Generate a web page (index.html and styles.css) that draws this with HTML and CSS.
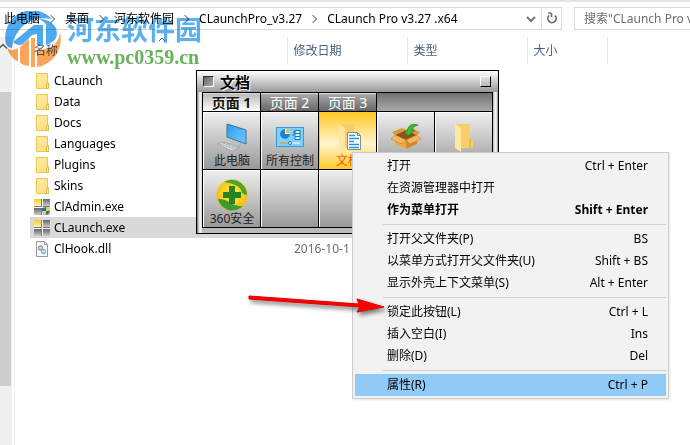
FILE: index.html
```html
<!DOCTYPE html>
<html lang="zh-CN">
<head>
    <meta charset="UTF-8">
    <meta name="viewport" content="width=device-width, initial-scale=1.0">
    <title>CLaunch Pro v3.27 .x64</title>
    <link rel="stylesheet" href="styles.css">
</head>
<body>
    <!-- shared icons -->
    <svg class="defs" width="0" height="0">
        <defs>
            <linearGradient id="folderFill" x1="0" y1="0" x2="1" y2="1">
                <stop offset="0" stop-color="#ffeca6"/>
                <stop offset="1" stop-color="#fbdc7c"/>
            </linearGradient>
            <linearGradient id="grayFill" x1="0" y1="0" x2="0" y2="1">
                <stop offset="0" stop-color="#666"/>
                <stop offset="1" stop-color="#ccc"/>
            </linearGradient>
            <linearGradient id="goldFill" x1="0" y1="0" x2="0" y2="1">
                <stop offset="0" stop-color="#ffc928"/>
                <stop offset="1" stop-color="#fff3b8"/>
            </linearGradient>
            <linearGradient id="screenFill" x1="0" y1="0" x2="1" y2="1">
                <stop offset="0" stop-color="#2b9df0"/>
                <stop offset="1" stop-color="#72cbff"/>
            </linearGradient>
            <radialGradient id="ballFill" cx="0.5" cy="0.45" r="0.6">
                <stop offset="0" stop-color="#fff04a"/>
                <stop offset="1" stop-color="#f7b500"/>
            </radialGradient>
            <symbol id="folder" viewBox="0 0 16 16">
                <path d="M2.500 0.500h11v9.500h1v5.500h-12z" fill="url(#folderFill)" stroke="#edc54f"/>
                <path d="M12.500 15.500v-4.500l2-1v5.500z" fill="#ffe9a0" stroke="#e5bb3f"/>
            </symbol>
            <symbol id="app" viewBox="0 0 16 16">
                <rect width="16" height="16" fill="#fff"/>
                <rect x="0" y="0" width="7" height="7" fill="url(#goldFill)"/>
                <rect x="8" y="0" width="8" height="7" fill="url(#grayFill)"/>
                <rect x="0" y="9" width="7" height="7" fill="url(#grayFill)"/>
                <rect x="8" y="9" width="8" height="7" fill="url(#grayFill)"/>
                <path d="M0 7.500h16M7.500 0v16" stroke="#777"/>
                <path d="M0 8.500h16M8.500 0v16" stroke="#fff"/>
            </symbol>
            <symbol id="bigFolder" viewBox="0 0 32 32">
                <path d="M7 3h15v14l3 3v7H11z" fill="#f6cf69"/>
                <path d="M7 3l6 4v24l-6-4z" fill="#ffe7a1"/>
                <path d="M21 18h2v9h-2z" fill="#e9bb4e"/>
            </symbol>
        </defs>
    </svg>

    <header class="toolbar">
        <nav class="address">
            <div class="crumbs">
                <a href="#">此电脑</a>
                <a href="#">桌面</a>
                <a href="#">河东软件园</a>
                <a href="#">CLaunchPro_v3.27</a>
                <a href="#">CLaunch Pro v3.27 .x64</a>
            </div>
            <button class="drop" aria-label="以前的位置">
                <svg width="12" height="8" viewBox="0 0 12 8"><path d="M2 2l4 4 4-4" fill="none" stroke="#777" stroke-width="2"/></svg>
            </button>
            <button class="refresh" aria-label="刷新">
                <svg width="12" height="13" viewBox="0 0 12 13"><path d="M9 3.500A4.200 4.200 0 1 1 3 3.500M5 1H2.200M5.500 1v4" fill="none" stroke="#666" stroke-width="1.600"/></svg>
            </button>
        </nav>
        <input class="search" type="text" aria-label="搜索" placeholder='搜索"CLaunch Pro v3.27 .x64"'>
    </header>

    <div class="explorer">
        <div class="scrollbar">
            <svg class="up" width="8" height="6" viewBox="0 0 8 6"><path d="M-1 5.500L3 1.500l4 4" fill="none" stroke="#555" stroke-width="1.500"/></svg>
            <div class="thumb"></div>
        </div>
        <main class="files">
            <table>
                <thead>
                    <tr>
                        <th class="name sorted">
                            名称
                            <svg width="8" height="5" viewBox="0 0 8 5"><path d="M1 4l3-3 3 3" fill="none" stroke="#666"/></svg>
                        </th>
                        <th class="date">修改日期</th>
                        <th class="type">类型</th>
                        <th class="size">大小</th>
                        <th></th>
                    </tr>
                </thead>
                <tbody>
                    <tr><td><svg class="icon"><use href="#folder"/></svg>CLaunch</td><td></td><td></td><td></td></tr>
                    <tr><td><svg class="icon"><use href="#folder"/></svg>Data</td><td></td><td></td><td></td></tr>
                    <tr><td><svg class="icon"><use href="#folder"/></svg>Docs</td><td></td><td></td><td></td></tr>
                    <tr><td><svg class="icon"><use href="#folder"/></svg>Languages</td><td></td><td></td><td></td></tr>
                    <tr><td><svg class="icon"><use href="#folder"/></svg>Plugins</td><td></td><td></td><td></td></tr>
                    <tr><td><svg class="icon"><use href="#folder"/></svg>Skins</td><td></td><td></td><td></td></tr>
                    <tr>
                        <td>
                            <svg class="icon" viewBox="0 0 16 16">
                                <use href="#app"/>
                                <path d="M12 8l4 1v3q-1 3-4 4-3-1-4-4V9z" fill="#1b6fc4"/>
                                <path d="M12 8l4 1v3h-4zM12 12v4q-3-1-4-4z" fill="#f9cf35"/>
                            </svg>ClAdmin.exe
                        </td>
                        <td></td><td></td><td></td>
                    </tr>
                    <tr class="selected"><td><svg class="icon"><use href="#app"/></svg>CLaunch.exe</td><td></td><td></td><td></td></tr>
                    <tr>
                        <td>
                            <svg class="icon" viewBox="0 0 16 16">
                                <path d="M2.500 0.500h8l3 3v12h-11z" fill="#fafafa" stroke="#999"/>
                                <path d="M10.500 0.500v3h3" fill="none" stroke="#999"/>
                                <circle cx="6.500" cy="7" r="2" fill="#ddd" stroke="#999" stroke-width="1.300"/>
                                <circle cx="9.500" cy="10.500" r="2" fill="#d9edf7" stroke="#8db2c6" stroke-width="1.300"/>
                            </svg>ClHook.dll
                        </td>
                        <td>2016-10-1</td><td></td><td></td>
                    </tr>
                </tbody>
            </table>
        </main>
    </div>

    <!-- site watermark -->
    <div class="watermark">
        <svg width="56" height="56" viewBox="0 0 56 56">
            <path d="M1 33A27 27 0 0 1 47 8Q30 5 19 14 9 22 7 37 3 37 1 33z" fill="#4fa9ee"/>
            <path d="M8 31L29 14h9v20h-6V23l-5 1-9 9q-5 3-10-2z" fill="#4fa9ee"/>
            <path d="M34 8q12 0 17 9 3 10-4 14-4 3-6 3V13q-3-3-7-5z" fill="#4fa9ee"/>
            <path d="M55 22A28 28 0 0 1 32 56V41q4-3 9-3 12-3 14-16z" fill="#f9a65a"/>
            <path d="M15 36l9-8v27q-5 0-9-3z" fill="#f9a65a"/>
            <path d="M26 27h4v29h-4z" fill="#f9a65a"/>
            <path d="M2 37q5 4 11 0v14Q5 46 2 37z" fill="#f9a65a"/>
        </svg>
        <div>
            <div class="site">河东软件园</div>
            <div class="url">www.pc0359.cn</div>
        </div>
    </div>

    <!-- launcher window -->
    <section class="launcher">
        <div class="title">
            <button class="box dark" aria-label="菜单"></button>
            <h1>文档</h1>
            <button class="box" aria-label="关闭"></button>
        </div>
        <div class="panel">
            <div class="tabs">
                <button class="active">页面 1</button>
                <button>页面 2</button>
                <button>页面 3</button>
            </div>
            <div class="grid">
                <button>
                    <svg viewBox="0 0 32 32">
                        <path d="M11 3l19 6v14l-19-7z" fill="url(#screenFill)" stroke="#3b6f98"/>
                        <path d="M1 23l6-2 17 5-8 4z" fill="#d7dce0" stroke="#a4abb0"/>
                        <path d="M4 23l15 5M7 22l15 5" stroke="#9aa2a8" stroke-dasharray="2 1"/>
                        <path d="M18 20l-3 3 6 2 4-2" fill="none" stroke="#b2b8bc"/>
                    </svg>
                    此电脑
                </button>
                <button>
                    <svg viewBox="0 0 32 32">
                        <rect x="2.500" y="6.500" width="27" height="19" fill="#7fd0fa" stroke="#3a9ad9"/>
                        <circle cx="11" cy="13" r="5" fill="#fff"/>
                        <path d="M11 13V8a5 5 0 1 0 5 5z" fill="#1583d8"/>
                        <path d="M12 12V8a5 5 0 0 1 4 4z" fill="#ffb52a"/>
                        <path d="M18 14h2v-4h2M21 9.500h5v3h-5zM21 12.500h5v3h-5zM21 15.500h5v3h-5z" fill="#d9f2ff" stroke="#1778bd"/>
                        <path d="M6 22h10" stroke="#f58a16"/>
                        <path d="M17 22h9" stroke="#fff"/>
                        <circle cx="16" cy="22" r="1.500" fill="#fff" stroke="#1778bd"/>
                    </svg>
                    所有控制
                </button>
                <button class="hot">
                    <svg viewBox="0 0 32 32">
                        <use href="#bigFolder"/>
                        <path d="M15.500 11.500h10l3 3v14h-13z" fill="#fff" stroke="#7d8d98"/>
                        <path d="M25.500 11.500v3h3" fill="none" stroke="#7d8d98"/>
                        <path d="M17 14.500h6M17 17.500h10M17 20.500h5M17 23.500h10M17 26.500h10" stroke="#2b93dc" stroke-width="1.500"/>
                    </svg>
                    文档
                </button>
                <button>
                    <svg viewBox="0 0 32 32">
                        <path d="M5 14l11-5 11 5-11 5z" fill="#8e5317"/>
                        <path d="M5 14l11 5v9L5 23z" fill="#eea747"/>
                        <path d="M27 14l-11 5v9l11-5z" fill="#d98928"/>
                        <path d="M5 14l11 5-4 4-11-5zM27 14l-11 5 4 4 11-5z" fill="#f2b65f" stroke="#b77422" stroke-width="0.500"/>
                        <path d="M5 14L2 11l10-4 4 2zM27 14l3-3-10-4-4 2z" fill="#e0973a"/>
                        <path d="M28 4q-9-3-11 6h-3l4 5 7-6h-3q1-4 6-5z" fill="#43b92c" stroke="#1e7b18" stroke-width="0.700"/>
                    </svg>
                </button>
                <button><svg viewBox="0 0 32 32"><use href="#bigFolder"/></svg></button>
                <button>
                    <svg viewBox="0 0 32 32">
                        <circle cx="16" cy="16" r="15.500" fill="url(#ballFill)"/>
                        <path d="M8 3Q17-2 25 4q6 5 6 12-2 0-5-2-1-6-7-8-4-2-11-3z" fill="#4aa626"/>
                        <path d="M2 20q8 0 12 4 7 4 13 3-7 6-15 4Q4 28 2 20z" fill="#3d9c2c"/>
                        <path d="M13 7h6v6h6v6h-6v6h-6v-6H7v-6h6z" fill="#278421"/>
                    </svg>
                    360安全
                </button>
                <button aria-label="空白"></button>
                <button aria-label="空白"></button>
                <button aria-label="空白"></button>
                <button aria-label="空白"></button>
            </div>
        </div>
    </section>

    <!-- context menu -->
    <div class="menu" role="menu">
        <button role="menuitem"><span>打开</span><span>Ctrl + Enter</span></button>
        <button role="menuitem"><span>在资源管理器中打开</span></button>
        <button role="menuitem" class="default"><span>作为菜单打开</span><span>Shift + Enter</span></button>
        <hr>
        <button role="menuitem"><span>打开父文件夹(P)</span><span>BS</span></button>
        <button role="menuitem"><span>以菜单方式打开父文件夹(U)</span><span>Shift + BS</span></button>
        <button role="menuitem"><span>显示外壳上下文菜单(S)</span><span>Alt + Enter</span></button>
        <hr>
        <button role="menuitem"><span>锁定此按钮(L)</span><span>Ctrl + L</span></button>
        <button role="menuitem"><span>插入空白(I)</span><span>Ins</span></button>
        <button role="menuitem"><span>删除(D)</span><span>Del</span></button>
        <hr>
        <button role="menuitem" class="current"><span>属性(R)</span><span>Ctrl + P</span></button>
    </div>

    <svg class="arrow" width="144" height="32" viewBox="0 0 144 32">
        <path d="M2 3L112 11 110 6 137 14 110 19 113 14 2 6z" fill="#f00" stroke="#d00" stroke-width="1" stroke-linejoin="round"/>
    </svg>
</body>
</html>
```

FILE: styles.css
```css
* {
    box-sizing: border-box;
}

body {
    font-family: "Noto Sans", "Noto Sans CJK SC", sans-serif;
    font-size: 12px;
    line-height: 16px;
    color: #000;
    background-color: #fff;
    margin: 0;
    height: 100vh;
    display: flex;
    flex-direction: column;
    position: relative;
    overflow: hidden;
}

button {
    font: inherit;
    color: inherit;
    background: none;
    border: none;
    padding: 0;
}

svg {
    display: block;
    flex: none;
}

.defs {
    position: absolute;
}

/* address bar */
.toolbar {
    display: flex;
    gap: 12px;
    padding-top: 5px;
    border-top: 2px solid #e5e5e5;
    margin-bottom: 7px;
}

.address {
    flex: 1;
    display: flex;
    height: 23px;
    border: 1px solid #d9d9d9;
    border-left: none;
}

.crumbs {
    flex: 1;
    display: flex;
    align-items: center;
    padding-left: 4px;
    white-space: nowrap;
}

.crumbs a {
    color: #000;
    text-decoration: none;
    display: flex;
    align-items: center;
}

.crumbs a + a::before {
    content: "";
    width: 5px;
    height: 5px;
    margin: 0 11px 0 8px;
    border: solid #777;
    border-width: 1px 1px 0 0;
    transform: rotate(45deg);
}

.drop,
.refresh {
    width: 20px;
    display: flex;
    align-items: center;
    justify-content: center;
}

.refresh {
    border-left: 1px solid #d9d9d9;
}

.search {
    width: 116px;
    height: 23px;
    padding: 0 0 0 9px;
    font: inherit;
    border: 1px solid #d9d9d9;
    border-right: none;
}

.search::placeholder {
    color: #6d6d6d;
}

/* file list */
.explorer {
    flex: 1;
    display: flex;
}

.scrollbar {
    width: 12px;
    background-color: #f0f0f0;
}

.up {
    margin: 6px 0 43px;
}

.thumb {
    width: 11px;
    height: 72%;
    background-color: #cdcdcd;
}

.files {
    flex: 1;
    margin-left: 2px;
    padding-left: 15px;
    border-left: 1px solid #f0f0f0;
}

table {
    width: 100%;
    table-layout: fixed;
    border-collapse: collapse;
}

th {
    height: 27px;
    padding: 0 6px;
    font-weight: normal;
    text-align: left;
    color: #4c607a;
    border-left: 1px solid #e5e5e5;
}

.name {
    width: 257px;
    padding-left: 4px;
    border-left: none;
}

.sorted {
    position: relative;
}

.sorted svg {
    position: absolute;
    top: 0;
    left: 50%;
}

.date,
.type {
    width: 120px;
}

.size {
    width: 80px;
}

tbody::before {
    content: "";
    display: block;
    height: 6px;
}

td {
    height: 21px;
    padding: 0 7px;
    color: #6d6d6d;
    white-space: nowrap;
}

td:first-child {
    padding-left: 4px;
    color: #000;
}

.icon {
    display: inline-block;
    width: 16px;
    height: 16px;
    margin-right: 4px;
    vertical-align: top;
}

.selected td {
    background-color: #d9d9d9;
}

/* watermark */
.watermark {
    position: absolute;
    top: 11px;
    left: 5px;
    display: flex;
    gap: 6px;
    mix-blend-mode: multiply;
}

.site {
    font-family: "Noto Sans CJK SC", sans-serif;
    font-size: 27px;
    font-weight: bold;
    line-height: 36px;
    color: #5cb0f0;
}

.url {
    font-family: "Liberation Serif", serif;
    font-size: 20px;
    font-weight: bold;
    line-height: 20px;
    color: #67b35b;
}

/* launcher */
.launcher {
    position: absolute;
    top: 70px;
    left: 196px;
    padding: 0 5px 5px;
    border: 1px solid #000;
    background: linear-gradient(to right, #777, #fff 3px, #bbb 6px, #bbb 296px, #fff 299px, #888);
}

.title {
    display: flex;
    align-items: center;
    gap: 6px;
    height: 21px;
    margin: 0 -5px;
    padding: 0 7px 0 6px;
    background: linear-gradient(#fff, #999);
}

.title h1 {
    flex: 1;
    margin: 0;
    font-size: 15px;
    line-height: 20px;
    text-shadow: 1px 1px #fff;
}

.box {
    width: 11px;
    height: 11px;
    border: 1px solid;
    border-color: #fff #000 #000 #fff;
}

.dark {
    border-color: #333 #fff #fff #333;
    background: linear-gradient(135deg, #666, #aaa);
}

.panel {
    border: 1px solid #000;
    background-color: #000;
}

.tabs {
    display: flex;
    gap: 1px;
    height: 19px;
    border-bottom: 1px solid #000;
    background: linear-gradient(#707070, #aaa);
}

.tabs button {
    width: 57px;
    font-size: 14px;
    line-height: 16px;
    color: #fff;
    background: linear-gradient(#aaa, #666);
    box-shadow: 1px 0 #000;
    border-top: 1px solid #ddd;
    white-space: nowrap;
}

.tabs .active {
    font-weight: bold;
    color: #111;
    background: linear-gradient(#bbb, #fff);
    text-shadow: 1px 1px #fff;
}

.grid {
    display: grid;
    grid-template-columns: repeat(5, 57px);
    grid-auto-rows: 57px;
    gap: 1px;
}

.grid button {
    display: flex;
    flex-direction: column;
    align-items: center;
    padding-top: 8px;
    color: #222;
    background: linear-gradient(#eee, #999);
    border: solid #fff;
    border-width: 1px 0 0 1px;
    white-space: nowrap;
}

.grid svg {
    width: 32px;
    height: 32px;
}

.grid .hot {
    color: #ff5a00;
    background: linear-gradient(#ffc928, #fff6cf 55%, #ffc928);
    border-color: #ffc928;
}

/* context menu */
.menu {
    position: absolute;
    top: 152px;
    left: 352px;
    width: 317px;
    padding: 2px;
    background-color: #f2f2f2;
    border: 1px solid #ccc;
    box-shadow: 1px 1px 2px rgba(0, 0, 0, 0.1);
}

.menu button {
    display: flex;
    justify-content: space-between;
    align-items: center;
    width: 100%;
    height: 22px;
    padding: 0 18px 0 32px;
}

.menu .default {
    font-weight: bold;
}

.menu .current {
    background-color: #91c9f7;
}

.menu hr {
    margin: 3px 0 3px 28px;
    border: none;
    border-top: 1px solid #d0d0d0;
}

.arrow {
    position: absolute;
    top: 293px;
    left: 247px;
    filter: drop-shadow(2px 3px 2px rgba(0, 0, 0, 0.5));
}
```
